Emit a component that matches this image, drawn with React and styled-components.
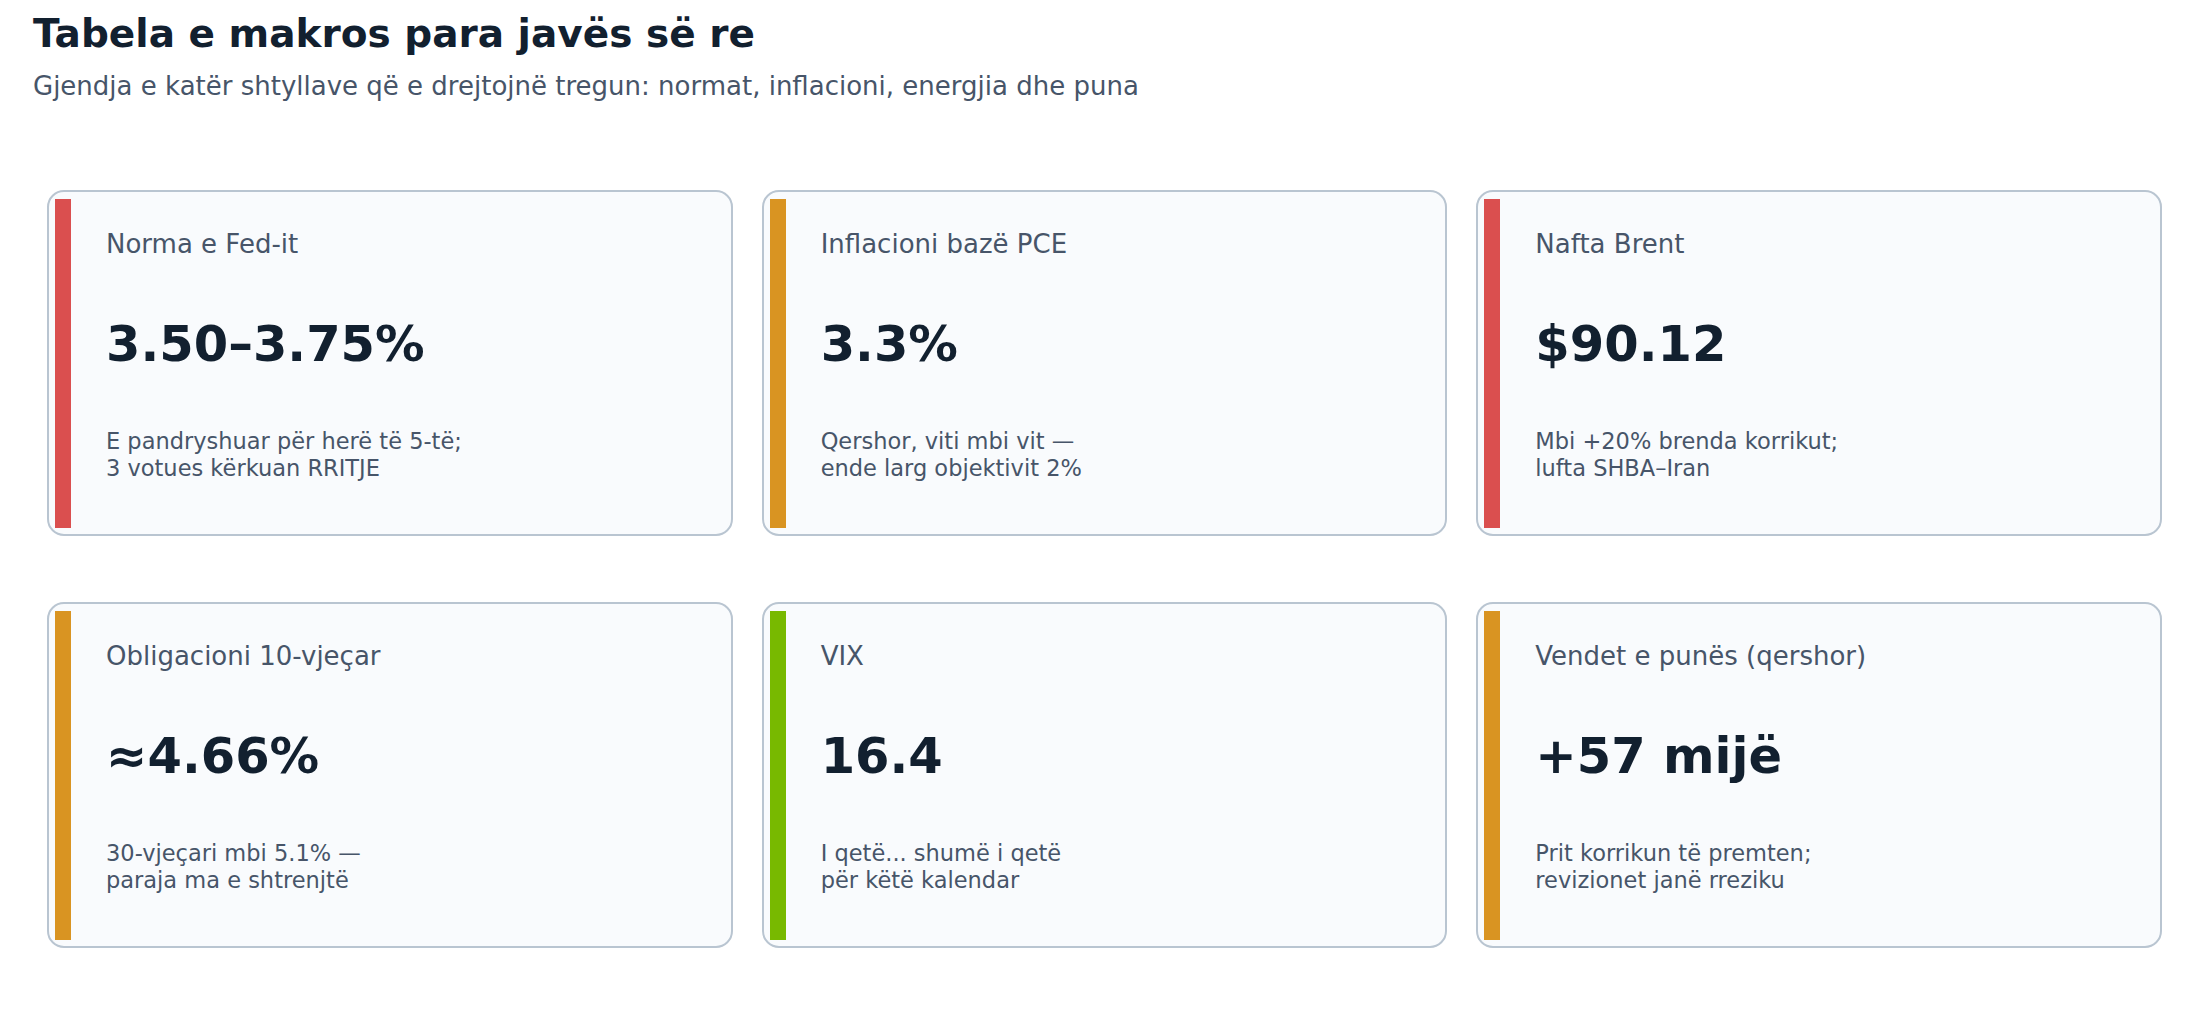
import React from "react";
import styled, { createGlobalStyle } from "styled-components";

const Global = createGlobalStyle`
  html, body { margin: 0; padding: 0; background: #ffffff; }
  body { font-family: "DejaVu Sans", "Liberation Sans", sans-serif; }
`;

const Page = styled.div`
  width: 2210px;
  height: 1020px;
  box-sizing: border-box;
  padding: 11px 0 0 33px;
  background: #ffffff;
`;

const Header = styled.header`
  display: flex;
  flex-direction: column;
`;

const Title = styled.h1`
  margin: 0;
  font-size: 39px;
  line-height: 1.2;
  font-weight: 700;
  color: #12202f;
`;

const Subtitle = styled.p`
  margin: 13px 0 0;
  font-size: 26px;
  line-height: 1.2;
  font-weight: 400;
  color: #475569;
`;

const Grid = styled.div`
  margin: 88px 48px 0 14px;
  display: grid;
  grid-template-columns: repeat(3, 1fr);
  column-gap: 29px;
  row-gap: 66px;
`;

const Card = styled.div`
  height: 346px;
  box-sizing: border-box;
  border: 2px solid #b9c5d1;
  border-radius: 17px;
  background: #f9fbfd;
  padding: 7px 6px 6px 6px;
  display: flex;
`;

const Bar = styled.div`
  width: 16px;
  flex: none;
  background: ${(p) => p.$color};
`;

const Content = styled.div`
  display: flex;
  flex-direction: column;
  padding: 30px 0 0 35px;
`;

const Label = styled.div`
  font-size: 26px;
  line-height: 1.2;
  color: #475569;
`;

const Value = styled.div`
  margin-top: 55px;
  font-size: 49.5px;
  line-height: 1.2;
  font-weight: 700;
  color: #12202f;
`;

const Note = styled.div`
  margin-top: 53px;
  font-size: 22.5px;
  line-height: 27px;
  color: #475569;
  white-space: pre-line;
`;

const RED = "#da4f4f";
const ORANGE = "#d99422";
const GREEN = "#78b900";

const cards = [
  { label: "Norma e Fed-it", value: "3.50–3.75%", note: "E pandryshuar për herë të 5-të;\n3 votues kërkuan RRITJE", color: RED },
  { label: "Inflacioni bazë PCE", value: "3.3%", note: "Qershor, viti mbi vit —\nende larg objektivit 2%", color: ORANGE },
  { label: "Nafta Brent", value: "$90.12", note: "Mbi +20% brenda korrikut;\nlufta SHBA–Iran", color: RED },
  { label: "Obligacioni 10-vjeçar", value: "≈4.66%", note: "30-vjeçari mbi 5.1% —\nparaja ma e shtrenjtë", color: ORANGE },
  { label: "VIX", value: "16.4", note: "I qetë... shumë i qetë\npër këtë kalendar", color: GREEN },
  { label: "Vendet e punës (qershor)", value: "+57 mijë", note: "Prit korrikun të premten;\nrevizionet janë rreziku", color: ORANGE },
];

export default function App() {
  return (
    <>
      <Global />
      <Page>
        <Header>
          <Title>Tabela e makros para javës së re</Title>
          <Subtitle>Gjendja e katër shtyllave që e drejtojnë tregun: normat, inflacioni, energjia dhe puna</Subtitle>
        </Header>
        <Grid>
          {cards.map((c) => (
            <Card key={c.label}>
              <Bar $color={c.color} />
              <Content>
                <Label>{c.label}</Label>
                <Value>{c.value}</Value>
                <Note>{c.note}</Note>
              </Content>
            </Card>
          ))}
        </Grid>
      </Page>
    </>
  );
}
